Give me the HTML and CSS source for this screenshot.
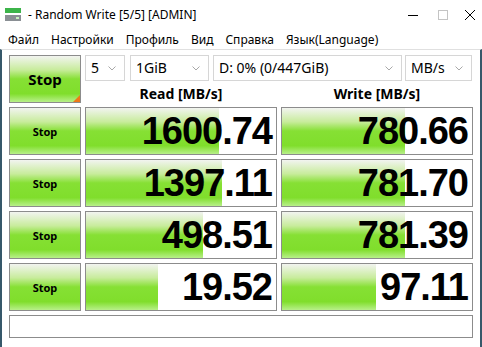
FILE: index.html
```html
<!DOCTYPE html>
<html lang="ru">
<head>
    <meta charset="UTF-8">
    <title>Random Write [5/5] [ADMIN]</title>
    <link rel="stylesheet" href="styles.css">
</head>
<body>
<div class="window">
    <div class="titlebar">
        <svg class="app-icon" width="16" height="14" viewBox="0 0 16 14">
            <rect x="0" y="0" width="16" height="5" fill="#3cb44a"/>
            <rect x="0" y="7" width="16" height="6" fill="#8a8f94"/>
            <rect x="11" y="9" width="3" height="2" fill="#c8f0c0"/>
        </svg>
        <span class="title">- Random Write [5/5] [ADMIN]</span>
        <div class="controls">
            <span class="ctl"><svg width="10" height="10" viewBox="0 0 10 10"><line x1="0" y1="5.5" x2="10" y2="5.5" stroke="#000" stroke-width="1"/></svg></span>
            <span class="ctl"><svg width="10" height="10" viewBox="0 0 10 10"><rect x="0.5" y="0.5" width="9" height="9" fill="none" stroke="#c4c4c4"/></svg></span>
            <span class="ctl ctl-close"><svg width="10" height="10" viewBox="0 0 10 10"><path d="M0 0L10 10M10 0L0 10" stroke="#000" stroke-width="1"/></svg></span>
        </div>
    </div>

    <nav class="menubar">
        <span>Файл</span>
        <span>Настройки</span>
        <span>Профиль</span>
        <span>Вид</span>
        <span>Справка</span>
        <span>Язык(Language)</span>
    </nav>

    <main class="client">
        <div class="board">
            <button class="stop stop-all">Stop<i class="corner"></i></button>

            <div class="options">
                <div class="combo c-count">5<svg class="chev" width="8" height="5" viewBox="0 0 8 5"><polyline points="0.5,0.5 4,4 7.5,0.5" fill="none" stroke="#a8a8a8"/></svg></div>
                <div class="combo c-size">1GiB<svg class="chev" width="8" height="5" viewBox="0 0 8 5"><polyline points="0.5,0.5 4,4 7.5,0.5" fill="none" stroke="#a8a8a8"/></svg></div>
                <div class="combo c-drive">D: 0% (0/447GiB)<svg class="chev" width="8" height="5" viewBox="0 0 8 5"><polyline points="0.5,0.5 4,4 7.5,0.5" fill="none" stroke="#a8a8a8"/></svg></div>
                <div class="combo c-unit">MB/s<svg class="chev" width="8" height="5" viewBox="0 0 8 5"><polyline points="0.5,0.5 4,4 7.5,0.5" fill="none" stroke="#a8a8a8"/></svg></div>
            </div>

            <div class="head">Read [MB/s]</div>
            <div class="head">Write [MB/s]</div>

            <button class="stop">Stop</button>
            <div class="meter"><div class="fill" style="width: 70%"></div><span class="value">1600.74</span></div>
            <div class="meter"><div class="fill" style="width: 64.6%"></div><span class="value">780.66</span></div>

            <button class="stop">Stop</button>
            <div class="meter"><div class="fill" style="width: 71.5%"></div><span class="value">1397.11</span></div>
            <div class="meter"><div class="fill" style="width: 64.6%"></div><span class="value">781.70</span></div>

            <button class="stop">Stop</button>
            <div class="meter"><div class="fill" style="width: 61.5%"></div><span class="value">498.51</span></div>
            <div class="meter"><div class="fill" style="width: 64.6%"></div><span class="value">781.39</span></div>

            <button class="stop">Stop</button>
            <div class="meter"><div class="fill" style="width: 38%"></div><span class="value">19.52</span></div>
            <div class="meter"><div class="fill" style="width: 49.5%"></div><span class="value">97.11</span></div>

            <div class="status"></div>
        </div>
    </main>
</div>
</body>
</html>
```

FILE: styles.css
```css
body {
    margin: 0;
    font-family: "Noto Sans", "Open Sans", sans-serif;
    background-color: #fff;
    color: #000;
}

.window {
    width: 482px;
    height: 347px;
    display: flex;
    flex-direction: column;
    overflow: hidden;
}

.titlebar {
    height: 29px;
    display: flex;
    align-items: center;
    font-size: 12px;
}

.app-icon {
    margin-left: 5px;
    margin-right: 7px;
}

.title {
    flex: 1;
}

.controls {
    display: flex;
}

.ctl {
    width: 30px;
    height: 29px;
    display: flex;
    align-items: center;
    justify-content: center;
}

.ctl-close {
    width: 24px;
}

.menubar {
    height: 20px;
    display: flex;
    align-items: center;
    padding-left: 2px;
    font-size: 12px;
    color: #000;
}

.menubar span {
    padding: 0 6px;
}

.client {
    flex: 1;
    border-top: 1px solid #e0e0e0;
    border-left: 2px solid #36586a;
    border-right: 2px solid #36586a;
    padding: 5px 0 0 7px;
}

.board {
    display: grid;
    grid-template-columns: 72px 192px 192px;
    grid-template-rows: 26px 18px repeat(4, 48px) 23px;
    gap: 4px;
}

.stop {
    margin: 0;
    padding: 0;
    border: 1px solid #8c8c8c;
    font-family: inherit;
    font-weight: bold;
    font-size: 11px;
    color: #000;
    background: linear-gradient(#f2f4f0 0%, #c8ec9c 30%, #86e034 50%, #80de2c 82%, #b8f08a 100%);
}

.stop-all {
    grid-row: span 2;
    position: relative;
    font-size: 15px;
}

.corner {
    position: absolute;
    right: 0;
    bottom: 0;
    width: 0;
    height: 0;
    border-left: 7px solid transparent;
    border-bottom: 7px solid #f07818;
}

.options {
    grid-column: span 2;
    display: flex;
    height: 26px;
}

.combo {
    position: relative;
    box-sizing: border-box;
    height: 26px;
    border: 1px solid #d6d6d6;
    padding-left: 5px;
    font-size: 14px;
    line-height: 24px;
}

.chev {
    position: absolute;
    right: 8px;
    top: 10px;
}

.c-count { width: 40px; margin-right: 5px; }
.c-size { width: 79px; margin-right: 4px; }
.c-drive { width: 189px; margin-right: 3px; }
.c-unit { width: 67px; }

.head {
    text-align: center;
    font-weight: bold;
    font-size: 14px;
    line-height: 18px;
}

.meter {
    position: relative;
    box-sizing: border-box;
    border: 1px solid #8c8c8c;
    background-color: #fff;
}

.fill {
    height: 100%;
    background: linear-gradient(#f2f4f0 0%, #c8ec9c 30%, #86e034 50%, #80de2c 82%, #b8f08a 100%);
}

.value {
    position: absolute;
    right: 4px;
    top: 0;
    line-height: 46px;
    font-family: "Liberation Sans", Arial, sans-serif;
    font-weight: bold;
    font-size: 38px;
    letter-spacing: -1px;
}

.status {
    grid-column: span 3;
    border: 1px solid #8c8c8c;
}
```
